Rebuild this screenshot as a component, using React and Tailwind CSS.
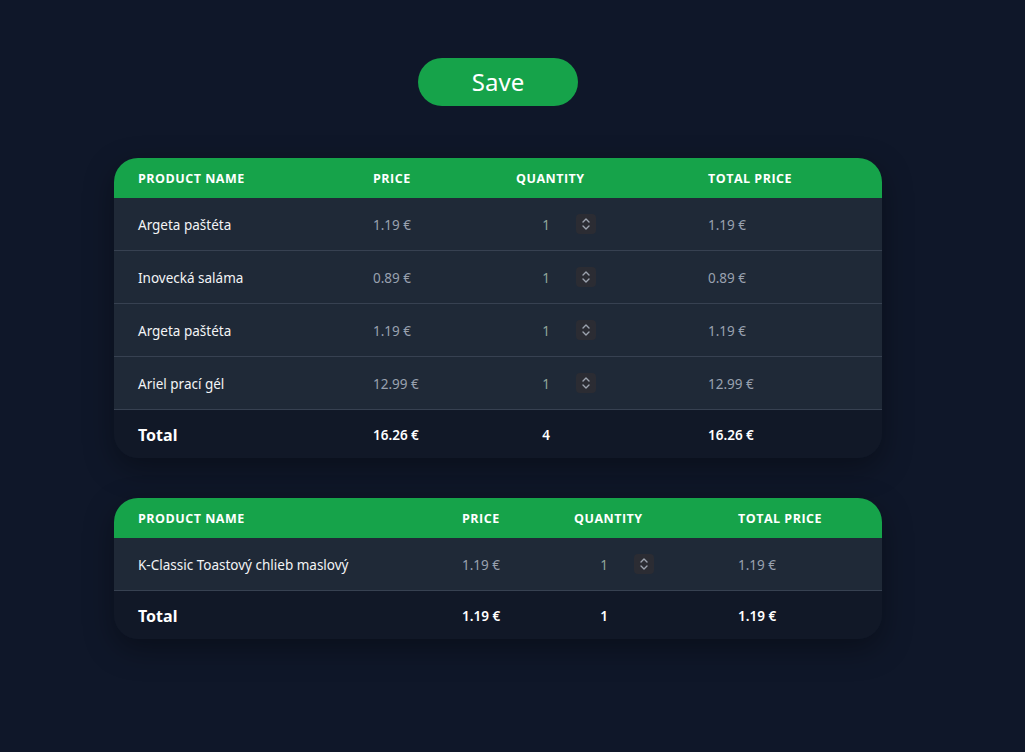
import React from 'react'

const tables = [
  {
    cols: ['w-[235px]', 'w-[143px]', 'w-[192px]', 'w-[198px]'],
    rows: [
      { name: 'Argeta paštéta', price: '1.19 €', qty: 1, total: '1.19 €' },
      { name: 'Inovecká saláma', price: '0.89 €', qty: 1, total: '0.89 €' },
      { name: 'Argeta paštéta', price: '1.19 €', qty: 1, total: '1.19 €' },
      { name: 'Ariel prací gél', price: '12.99 €', qty: 1, total: '12.99 €' },
    ],
    sum: { price: '16.26 €', qty: 4, total: '16.26 €' },
  },
  {
    cols: ['w-[324px]', 'w-[112px]', 'w-[164px]', 'w-[168px]'],
    rows: [{ name: 'K-Classic Toastový chlieb maslový', price: '1.19 €', qty: 1, total: '1.19 €' }],
    sum: { price: '1.19 €', qty: 1, total: '1.19 €' },
  },
]

function Spinner() {
  return (
    <div className="flex h-5 w-5 items-center justify-center rounded-sm bg-[#2b2c33]">
      <svg width="10" height="14" viewBox="0 0 10 14" fill="none" stroke="#9ca3af" strokeWidth="1.4" strokeLinecap="round" strokeLinejoin="round">
        <path d="M2 5l3-3 3 3" />
        <path d="M2 9l3 3 3-3" />
      </svg>
    </div>
  )
}

function QtyInput({ value }) {
  return (
    <div className="flex w-20 items-center">
      <span className="flex-1 pt-0.5 text-center text-[13.5px] text-[#8fa59a]">{value}</span>
      <Spinner />
    </div>
  )
}

function ProductTable({ cols, rows, sum }) {
  return (
    <div className="w-[768px] overflow-hidden rounded-3xl shadow-[0_10px_30px_rgba(0,0,0,0.35)]">
      <div className="flex h-10 items-center bg-[#16a34a] pt-0.5 text-[12.5px] font-bold uppercase tracking-[0.04em] text-white" style={{ fontFamily: '"Open Sans", sans-serif' }}>
        <div className={`${cols[0]} pl-6`}>Product name</div>
        <div className={`${cols[1]} pl-6`}>Price</div>
        <div className={`${cols[2]} pl-6`}>Quantity</div>
        <div className={`${cols[3]} pl-6`}>Total price</div>
      </div>
      {rows.map((r, i) => (
        <div key={i} className="flex h-[53px] items-center border-b border-[#374151] bg-[#1f2937] text-[13.5px]">
          <div className={`${cols[0]} pl-6 pt-0.5 text-gray-100`}>{r.name}</div>
          <div className={`${cols[1]} pl-6 pt-0.5 text-gray-400`}>{r.price}</div>
          <div className={`${cols[2]} pl-6`}><QtyInput value={r.qty} /></div>
          <div className={`${cols[3]} pl-6 pt-0.5 text-gray-400`}>{r.total}</div>
        </div>
      ))}
      <div className="flex h-12 items-center bg-[#111827] pt-0.5 text-[13.5px] font-semibold text-white">
        <div className={`${cols[0]} pl-6 text-base font-bold`}>Total</div>
        <div className={`${cols[1]} pl-6`}>{sum.price}</div>
        <div className={`${cols[2]} pl-6`}><div className="w-20 pr-5 text-center">{sum.qty}</div></div>
        <div className={`${cols[3]} pl-6`}>{sum.total}</div>
      </div>
    </div>
  )
}

export default function App() {
  return (
    <div className="min-h-screen bg-[#0f1729] pr-[29px] pt-[58px]" style={{ fontFamily: '"Noto Sans", "Open Sans", sans-serif' }}>
      <div className="flex flex-col items-center">
        <button className="h-12 w-40 rounded-full bg-[#16a34a] text-2xl text-white">Save</button>
        <div className="mt-[52px] flex flex-col gap-10">
          {tables.map((t, i) => (
            <ProductTable key={i} {...t} />
          ))}
        </div>
      </div>
    </div>
  )
}
